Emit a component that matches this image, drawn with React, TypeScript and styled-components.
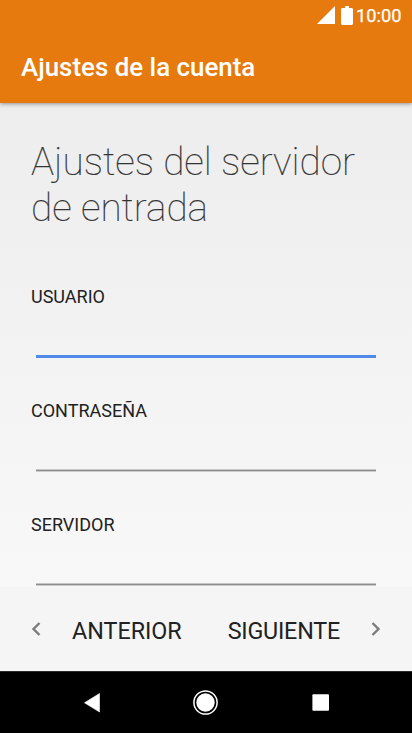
import React from "react";
import styled, { createGlobalStyle } from "styled-components";

const Global = createGlobalStyle`
  * { box-sizing: border-box; }
  html, body { margin: 0; overflow: hidden; background: #000; }
`;
const Screen = styled.div`
  width: 412px; height: 733px; display: flex; flex-direction: column;
  font-family: Roboto, sans-serif; color: #212121; overflow: hidden;
`;
const Header = styled.header`
  height: 103px; flex: none; background: #e67a0e; color: #fff; z-index: 1;
  box-shadow: 0 1px 4px rgba(0,0,0,.4);
`;
const StatusBar = styled.div`
  height: 32px; display: flex; justify-content: flex-end; align-items: center;
  padding: 0 10.5px 2px 0; font-size: 18.3px; font-weight: 400;
`;
const Signal = styled.svg`margin-right: 6px; display: block;`;
const Battery = styled.svg`margin-right: 2.5px; display: block;`;
const Time = styled.span`padding-top: 1px; -webkit-text-stroke: .25px #fff;`;
const Title = styled.h1`
  margin: 0; padding-left: 21px; height: 71px; line-height: 71px; font-size: 25.9px; font-weight: 500;
`;
const Content = styled.main`
  flex: 1; min-height: 0; padding: 36px 36px 0 31px; display: flex; flex-direction: column;
  background: linear-gradient(#ededed, #f8f8f8);
`;
const Heading = styled.h2`
  margin: 0 0 52px; font-size: 38.7px; line-height: 46px; font-weight: 100; height: 92px;
  white-space: nowrap; color: #333; -webkit-text-stroke: .2px #333;
`;
const Field = styled.label`
  display: block; height: 114px; flex: none;
`;
const Caption = styled.span`display: block; height: 28px; line-height: 28px; font-size: 18px;`;
const Line = styled.span<{ $active?: boolean }>`
  display: block; margin: 44px 0 0 5px; width: 340px; height: 3px;
  background: ${p => p.$active
    ? "#4f8ae8"
    : "linear-gradient(#c6c6c6 1px, #8c8c8c 1px, #8c8c8c 2px, #cccccc 2px)"};
`;
const Actions = styled.div`
  height: 84px; flex: none; background: #f5f5f5; display: flex; align-items: center;
  justify-content: space-between; padding: 0 30px;
`;
const Action = styled.button`
  border: 0; padding: 0; background: none; display: flex; align-items: center; gap: 30px;
  font: 400 23.3px Roboto, sans-serif; color: #212121;
`;
const ActionLabel = styled.span<{ $spacing: number }>`
  padding-top: 3px; letter-spacing: ${p => p.$spacing}px;
`;
const Navigation = styled.nav`
  height: 62px; flex: none; background: #000; border-top: 1px solid #2b2b2b;
`;
const NavIcons = styled.svg`display: block;`;
const Chevron = ({ d }: { d: string }) => (
  <svg width="12" height="16" viewBox="0 0 12 16" fill="none" stroke="#7c7c7c" strokeWidth="2.4"><path d={d} /></svg>
);

export default function App() {
  return <Screen><Global />
    <Header>
      <StatusBar>
        <Signal width="18" height="18"><path d="M18 0V18H0Z" fill="#fff" /></Signal>
        <Battery width="12" height="19"><path d="M4 0h4v2h3l1 1v15l-1 1H1l-1-1V3l1-1h3z" fill="#fff" /></Battery>
        <Time>10:00</Time>
      </StatusBar>
      <Title>Ajustes de la cuenta</Title>
    </Header>
    <Content>
      <Heading>Ajustes del servidor<br />de entrada</Heading>
      <Field><Caption>USUARIO</Caption><Line $active /></Field>
      <Field><Caption>CONTRASEÑA</Caption><Line /></Field>
      <Field><Caption>SERVIDOR</Caption><Line /></Field>
    </Content>
    <Actions>
      <Action><Chevron d="M9.5 2 3.5 8l6 6" /><ActionLabel $spacing={0}>ANTERIOR</ActionLabel></Action>
      <Action><ActionLabel $spacing={-0.2}>SIGUIENTE</ActionLabel><Chevron d="m2.5 2 6 6-6 6" /></Action>
    </Actions>
    <Navigation>
      <NavIcons width="412" height="61" viewBox="0 1 412 61">
        <path d="M99.5 22.5v18.5L84.5 31.8z" fill="#fff" stroke="#fff" strokeWidth=".6" strokeLinejoin="round" />
        <circle cx="205.5" cy="31.5" r="11.6" fill="none" stroke="#fff" strokeWidth="1.5" />
        <circle cx="205.5" cy="31.5" r="9.2" fill="#fff" />
        <rect x="312.4" y="23.2" width="16.6" height="16.6" rx="1" fill="#fff" />
      </NavIcons>
    </Navigation>
  </Screen>;
}
